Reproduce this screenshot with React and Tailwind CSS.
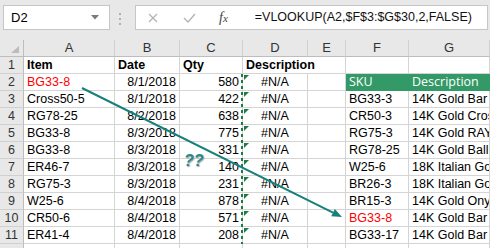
import React from 'react';

const rows = [
  { n: 1, a: 'Item', b: 'Date', c: 'Qty', d: 'Description', head: true },
  { n: 2, a: 'BG33-8', aRed: true, b: '8/1/2018', c: '580', d: '#N/A', f: 'SKU', g: 'Description', table: true },
  { n: 3, a: 'Cross50-5', b: '8/1/2018', c: '422', d: '#N/A', f: 'BG33-3', g: '14K Gold Bar Necklace' },
  { n: 4, a: 'RG78-25', b: '8/2/2018', c: '638', d: '#N/A', f: 'CR50-3', g: '14K Gold Cross Pendant' },
  { n: 5, a: 'BG33-8', b: '8/3/2018', c: '775', d: '#N/A', f: 'RG75-3', g: '14K Gold RAY Pendant' },
  { n: 6, a: 'BG33-8', b: '8/3/2018', c: '331', d: '#N/A', f: 'RG78-25', g: '14K Gold Ball Earrings' },
  { n: 7, a: 'ER46-7', b: '8/3/2018', c: '140', d: '#N/A', f: 'W25-6', g: '18K Italian Gold Chain' },
  { n: 8, a: 'RG75-3', b: '8/3/2018', c: '231', d: '#N/A', f: 'BR26-3', g: '18K Italian Gold Bracelet' },
  { n: 9, a: 'W25-6', b: '8/4/2018', c: '878', d: '#N/A', f: 'BR15-3', g: '14K Gold Onyx Ring' },
  { n: 10, a: 'CR50-6', b: '8/4/2018', c: '571', d: '#N/A', f: 'BG33-8', fRed: true, g: '14K Gold Bar Pendant' },
  { n: 11, a: 'ER41-4', b: '8/4/2018', c: '208', d: '#N/A', f: 'BG33-17', g: '14K Gold Bar Earrings' },
];

const cols = ['A', 'B', 'C', 'D', 'E', 'F', 'G'];
const gridCols = 'grid grid-cols-[24px_91px_65px_63px_65px_38px_63px_1fr]';

const Cell = ({ children, className = '' }) => (
  <div className={`h-[17px] leading-[14px] border-r border-b border-[#d4d4d4] bg-white flex items-end pb-[1px] px-[3px] overflow-hidden whitespace-nowrap ${className}`}>
    {children}
  </div>
);

const RowHead = ({ children }) => (
  <div className="h-[17px] leading-[14px] border-r border-b border-[#bdbdbd] border-b-[#d0d0d0] bg-[#e8e8e8] flex items-center justify-center text-[#333]">
    {children}
  </div>
);

export default function App() {
  return (
    <div className="relative w-[490px] h-[248px] overflow-hidden bg-[#e8e8e8] text-[12.5px] text-black font-['Liberation_Sans',Arial,sans-serif]">
      {/* formula bar */}
      <div className="h-[40px] flex items-start pt-[5px]">
        <div className="ml-[3px] w-[107px] h-[25px] bg-white border border-[#c6c6c6] flex items-center justify-between pl-[7px] pr-[10px] text-[13px]">
          <span>D2</span>
          <svg width="8" height="5" viewBox="0 0 8 5">
            <polygon points="0,0 8,0 4,4.5" fill="#7a7a7a" />
          </svg>
        </div>
        <div className="ml-[9px] mt-[8px] flex flex-col gap-[3px]">
          <div className="w-[2px] h-[2px] bg-[#b0b0b0]" />
          <div className="w-[2px] h-[2px] bg-[#b0b0b0]" />
          <div className="w-[2px] h-[2px] bg-[#b0b0b0]" />
        </div>
        <div className="ml-[14px] mr-[2px] flex-1 h-[25px] bg-white border border-[#c6c6c6] flex items-center">
          <svg className="ml-[12px]" width="10" height="10" viewBox="0 0 10 10">
            <path d="M1 1 L9 9 M9 1 L1 9" stroke="#b4b4b4" strokeWidth="1.3" fill="none" />
          </svg>
          <svg className="ml-[25px]" width="13" height="10" viewBox="0 0 13 10">
            <path d="M1 5 L5 9 L12 1" stroke="#b4b4b4" strokeWidth="1.4" fill="none" />
          </svg>
          <span className="ml-[23px] italic text-[#444] text-[14px] font-['Liberation_Serif',serif]">
            f<span className="text-[11px]">x</span>
          </span>
          <span className="ml-[27px] text-[12.5px] text-[#111]">=VLOOKUP(A2,$F$3:$G$30,2,FALSE)</span>
        </div>
      </div>

      {/* sheet */}
      <div className={gridCols}>
        <div className="h-[17px] border-r border-b border-[#bdbdbd] bg-[#e8e8e8] flex items-end justify-end pr-[4px] pb-[3px]">
          <svg width="8" height="7" viewBox="0 0 8 7">
            <polygon points="8,0 8,7 0,7" fill="#bcbcbc" />
          </svg>
        </div>
        {cols.map((c) => (
          <div key={c} className="h-[17px] leading-[14px] border-r border-b border-[#d0d0d0] border-b-[#bdbdbd] bg-[#e8e8e8] flex items-center justify-center text-[13px] text-[#333]">
            {c}
          </div>
        ))}

        {rows.map((r) => (
          <React.Fragment key={r.n}>
            <RowHead>{r.n}</RowHead>
            <Cell className={`${r.head ? 'font-bold' : ''} ${r.aRed ? 'text-[#ff0000]' : ''}`}>{r.a}</Cell>
            <Cell className={r.head ? 'font-bold' : 'justify-end'}>{r.b}</Cell>
            <Cell className={r.head ? 'font-bold' : 'justify-end'}>{r.c}</Cell>
            {r.head ? (
              <div className="h-[17px] leading-[14px] border-b border-[#d4d4d4] bg-white flex items-end pb-[1px] px-[3px] font-bold whitespace-nowrap overflow-visible z-10">
                {r.d}
              </div>
            ) : (
              <Cell className="relative justify-center">
                <span className="absolute left-[1px] top-[1px] w-0 h-0 border-t-[5px] border-t-[#1e7b45] border-r-[5px] border-r-transparent" />
                {r.d}
              </Cell>
            )}
            <Cell />
            {r.table ? (
              <>
                <div className="h-[17px] leading-[14px] bg-[#339966] border-b border-[#339966] flex items-end pb-[1px] px-[3px] text-white font-['Open_Sans',sans-serif]">
                  {r.f}
                </div>
                <div className="h-[17px] leading-[14px] bg-[#339966] border-b border-[#339966] flex items-end pb-[1px] px-[3px] text-white font-['Open_Sans',sans-serif] whitespace-nowrap overflow-hidden">
                  {r.g}
                </div>
              </>
            ) : (
              <>
                <Cell className={r.fRed ? 'text-[#ff0000]' : ''}>{r.f}</Cell>
                <Cell>{r.g}</Cell>
              </>
            )}
          </React.Fragment>
        ))}

        <div className="h-[17px] border-r border-[#bdbdbd] bg-[#e8e8e8]" />
        {cols.map((c) => (
          <div key={c} className="h-[17px] border-r border-[#d4d4d4] bg-white" />
        ))}
      </div>

      {/* copy marquee on C/D edge */}
      <div className="absolute left-[241px] top-[74px] w-[2px] h-[170px] bg-[repeating-linear-gradient(to_bottom,#1e7b45_0_3px,transparent_3px_6px)]" />

      {/* annotation arrow */}
      <svg className="absolute left-0 top-0 pointer-events-none" width="490" height="248" viewBox="0 0 490 248">
        <line x1="82" y1="88" x2="333" y2="212.6" stroke="#17807a" strokeWidth="2" />
        <polygon points="342,217 331.2,216.2 334.8,209" fill="#17807a" />
      </svg>
      <span className="absolute left-[184px] top-[151px] text-[16px] leading-[20px] font-bold italic text-[#2a8a8a] [text-shadow:1px_1px_1px_#9aa5a5]">
        ??
      </span>
    </div>
  );
}
